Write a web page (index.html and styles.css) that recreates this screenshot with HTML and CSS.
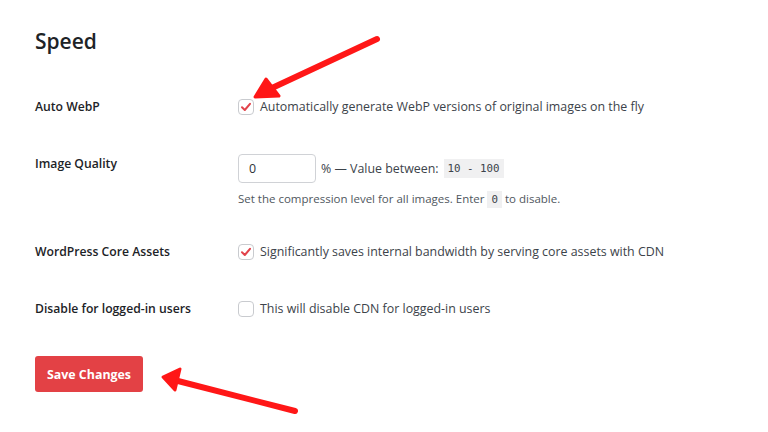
FILE: index.html
```html
<!DOCTYPE html>
<html>
<head>
<meta charset="utf-8">
<link rel="stylesheet" href="styles.css">
</head>
<body>
<div class="page">
  <h2 class="title">Speed</h2>
  <div class="form">
    <div class="row">
      <div class="label">Auto WebP</div>
      <label class="control check-line">
        <span class="box checked"><svg viewBox="0 0 16 16" width="16" height="16"><path d="M4 8.3 L6.8 11 L12 4.8" fill="none" stroke="#e2434b" stroke-width="2" stroke-linecap="round" stroke-linejoin="round"/></svg></span>
        <span>Automatically generate WebP versions of original images on the fly</span>
      </label>
    </div>
    <div class="row row-quality">
      <div class="label">Image Quality</div>
      <div class="control">
        <div class="input-line">
          <div class="input">0</div>
          <span>% — Value between:</span>
          <code class="code">10 - 100</code>
        </div>
        <p class="desc">Set the compression level for all images. Enter <code class="code small">0</code> to disable.</p>
      </div>
    </div>
    <div class="row">
      <div class="label">WordPress Core Assets</div>
      <label class="control check-line">
        <span class="box checked"><svg viewBox="0 0 16 16" width="16" height="16"><path d="M4 8.3 L6.8 11 L12 4.8" fill="none" stroke="#e2434b" stroke-width="2" stroke-linecap="round" stroke-linejoin="round"/></svg></span>
        <span>Significantly saves internal bandwidth by serving core assets with CDN</span>
      </label>
    </div>
    <div class="row">
      <div class="label">Disable for logged-in users</div>
      <label class="control check-line">
        <span class="box"></span>
        <span>This will disable CDN for logged-in users</span>
      </label>
    </div>
  </div>
  <button class="save">Save Changes</button>
</div>
<svg class="arrows" width="768" height="432" viewBox="0 0 768 432">
  <g fill="#ff1717" stroke="#ff1717" stroke-linejoin="round" stroke-linecap="round">
    <line x1="377" y1="39" x2="272" y2="88" stroke-width="6"/>
    <polygon points="255,97 266,79 279,96" stroke-width="3"/>
    <line x1="295" y1="411" x2="178" y2="381" stroke-width="6"/>
    <polygon points="163,377 180,369 175,390" stroke-width="3"/>
  </g>
</svg>
</body>
</html>
```
FILE: styles.css
```css
html, body {
  margin: 0;
  padding: 0;
  background: #ffffff;
}
body {
  font-family: "Open Sans", "Noto Sans", sans-serif;
  color: #3c434a;
  font-size: 12.4px;
  width: 768px;
  height: 432px;
  overflow: hidden;
  position: relative;
}
.page {
  padding: 26px 0 0 35px;
}
.title {
  margin: 0;
  font-size: 21px;
  line-height: 30px;
  font-weight: 600;
  color: #1d2327;
}
.form {
  margin-top: 39px;
  display: flex;
  flex-direction: column;
  gap: 33px;
}
.row {
  display: grid;
  grid-template-columns: 203px 1fr;
  align-items: start;
}
.label {
  font-weight: 600;
  font-size: 12.2px;
  color: #1d2327;
  line-height: 24px;
}
.control {
  line-height: 24px;
}
.check-line {
  display: flex;
  align-items: center;
  gap: 6px;
}
.box {
  width: 14px;
  height: 14px;
  border: 1px solid #c9cbcf;
  border-radius: 4px;
  display: flex;
  align-items: center;
  justify-content: center;
  flex: none;
  background: #fff;
}
.box svg {
  flex: none;
}
.input-line {
  display: flex;
  align-items: center;
  gap: 5px;
  margin-top: 2px;
}
.input {
  width: 66px;
  height: 27px;
  border: 1px solid #d0d2d6;
  border-radius: 4px;
  padding-left: 10px;
  line-height: 27px;
  color: #2c3338;
}
.code {
  font-family: "DejaVu Sans Mono", "Liberation Mono", monospace;
  font-size: 10.8px;
  background: #f0f0f1;
  color: #3c434a;
  padding: 2px 4px;
  line-height: 15px;
}
.code.small {
  padding: 2px 4px;
}
.desc {
  margin: 9px 0 0;
  font-size: 11.5px;
  line-height: 13px;
  color: #50575e;
}
.save {
  margin-top: 35px;
  background: #e34145;
  color: #fff;
  border: 0;
  border-radius: 3px;
  font-family: "Open Sans", "Noto Sans", sans-serif;
  font-weight: 700;
  font-size: 12.4px;
  width: 108px;
  height: 36px;
  padding: 0;
}
.arrows {
  position: absolute;
  left: 0;
  top: 0;
  pointer-events: none;
}
```
